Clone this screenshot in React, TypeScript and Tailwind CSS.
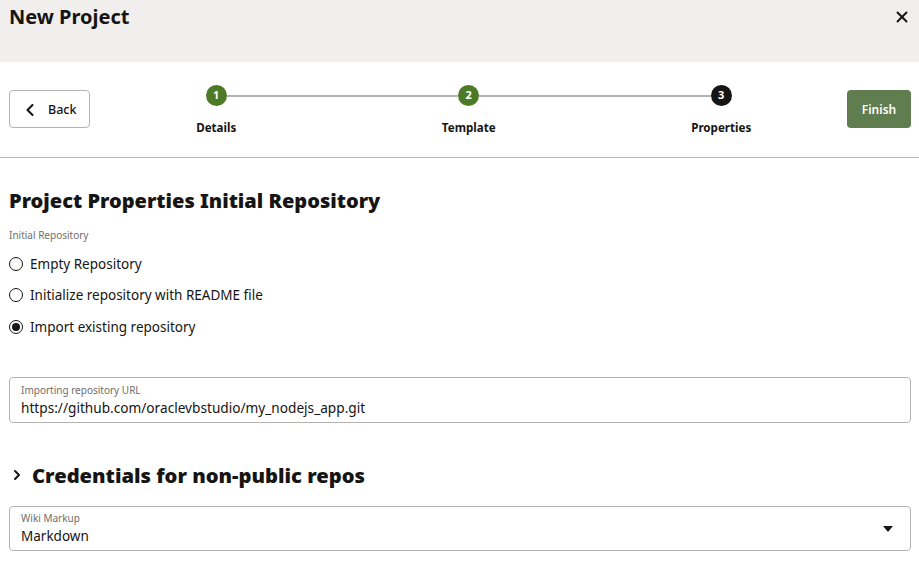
import { ChevronLeft, ChevronRight, X } from 'lucide-react';

const steps = [
  { n: 1, label: 'Details', done: true },
  { n: 2, label: 'Template', done: true },
  { n: 3, label: 'Properties', done: false },
];

const radios = [
  { label: 'Empty Repository', checked: false, h: 'h-[31px]' },
  { label: 'Initialize repository with README file', checked: false, h: 'h-[32px]' },
  { label: 'Import existing repository', checked: true, h: 'h-[32px]' },
];

export default function App() {
  return (
    <div className="w-[919px] h-[561px] overflow-hidden bg-white text-[#161513] font-['Noto_Sans',sans-serif]">
      <div className="h-[62px] bg-[#f1efed] pl-[9px] pr-[8px] flex justify-between items-start">
        <h1 className="text-[20px] leading-[34px] font-bold">New Project</h1>
        <X className="h-[18px] w-[18px] mt-[8px]" strokeWidth={2.5} />
      </div>

      <div className="h-[96px] border-b border-[#b9b8b6] px-[8px] pt-[28px] flex items-start">
        <button className="ml-[1px] w-[81px] h-[38px] shrink-0 border border-[#b4b3b1] rounded-[4px] flex items-center pl-[10px] pt-[2px] text-[12.5px] font-medium">
          <ChevronLeft className="h-[20px] w-[20px] mr-[8px]" strokeWidth={2.5} />
          <span>Back</span>
        </button>
        <div className="w-[757.5px] shrink-0 grid grid-cols-3 -mt-[5px]">
          {steps.map((s, i) => (
            <div key={s.n} className="flex flex-col items-center">
              <div className="w-full flex items-center">
                <div className={`flex-1 h-[2px] ${i === 0 ? 'bg-transparent' : 'bg-[#b4b3b1]'}`} />
                <div className={`w-[21px] h-[21px] rounded-full flex items-center justify-center text-white text-[11px] font-bold ${s.done ? 'bg-[#4d7a24]' : 'bg-[#161513]'}`}>
                  {s.n}
                </div>
                <div className={`flex-1 h-[2px] ${i === 2 ? 'bg-transparent' : 'bg-[#b4b3b1]'}`} />
              </div>
              <span className="mt-[13px] text-[11.6px] leading-[18px] font-bold">{s.label}</span>
            </div>
          ))}
        </div>
        <button className="-ml-[0.5px] w-[64px] h-[38px] shrink-0 rounded-[4px] bg-[#5f7d4f] text-white text-[12px] font-semibold pt-[1px]">
          Finish
        </button>
      </div>

      <div className="px-[9px]">
        <h2 className="mt-[28px] text-[20px] leading-[30px] font-black">Project Properties Initial Repository</h2>
        <div className="mt-[12px] text-[10px] leading-[14px] text-[#6f6e6c]">Initial Repository</div>
        <div className="mt-[6px]">
          {radios.map((r) => (
            <div key={r.label} className={`flex items-center ${r.h}`}>
              <span className="w-[14px] h-[14px] rounded-full border-[1.5px] border-[#161513] flex items-center justify-center mr-[7px]">
                {r.checked && <span className="w-[8px] h-[8px] rounded-full bg-[#161513]" />}
              </span>
              <span className="text-[13.5px] leading-[20px]">{r.label}</span>
            </div>
          ))}
        </div>

        <div className="mt-[34px] h-[46px] w-[902px] border border-[#b4b3b1] rounded-[4px] px-[11px] pt-[5px]">
          <div className="text-[10px] leading-[14px] text-[#6f6e6c]">Importing repository URL</div>
          <div className="mt-[1px] text-[13.65px] leading-[20px]">https://github.com/oraclevbstudio/my_nodejs_app.git</div>
        </div>

        <div className="mt-[37px] flex items-center h-[30px]">
          <ChevronRight className="h-[16px] w-[16px] mr-[7px]" strokeWidth={3} />
          <h2 className="text-[20.2px] leading-[30px] font-black">Credentials for non-public repos</h2>
        </div>

        <div className="mt-[16px] h-[45px] w-[902px] border border-[#b4b3b1] rounded-[4px] pl-[11px] pr-[17px] pt-[4px] flex justify-between">
          <div>
            <div className="text-[10px] leading-[14px] text-[#6f6e6c]">Wiki Markup</div>
            <div className="mt-[1px] text-[13.5px] leading-[20px]">Markdown</div>
          </div>
          <span className="mt-[15px] w-0 h-0 border-x-[5.5px] border-x-transparent border-t-[6px] border-t-[#161513]" />
        </div>
      </div>
    </div>
  );
}
